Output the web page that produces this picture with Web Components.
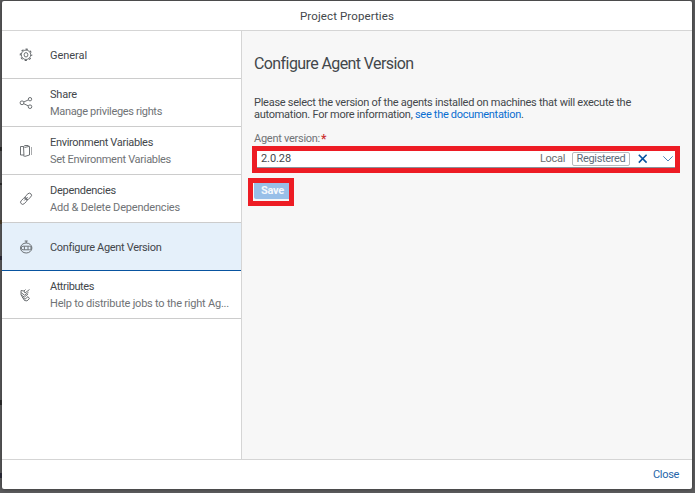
<!DOCTYPE html>
<html lang="en"><head><meta charset="utf-8"><title>Project Properties</title>
<style>
html,body{margin:0;background:#fff}
body{font-family:Roboto,"Noto Sans","Liberation Sans",sans-serif;font-size:11px;color:#43474b;width:699px;height:495px;overflow:hidden}
</style></head><body>
<dialog-backdrop><project-dialog></project-dialog></dialog-backdrop>
<script>
const make=(name,html,setup)=>customElements.define(name,class extends HTMLElement{
  constructor(){super();this.attachShadow({mode:'open'}).innerHTML=html}
  connectedCallback(){if(setup)setup(this,this.shadowRoot)}
});
/* One line of text, tracked so that it fills the width given in "w". */
make('text-run','<style>:host{display:inline-block;white-space:pre;line-height:inherit}span{display:inline-block}</style><span><slot></slot></span>',(el,r)=>{
  const w=+el.getAttribute('w'),s=r.querySelector('span'),n=el.textContent.length;
  s.style.letterSpacing=((w-s.getBoundingClientRect().width)/n)+'px';
  el.style.width=w+'px';
});
const icons={
gear:'<circle cx="7" cy="6.800" r="4.700"/><circle cx="7" cy="6.800" r="5.700" stroke-width="1.100" stroke-dasharray="2.240 2.240" stroke-dashoffset="1.120"/><ellipse cx="7" cy="6.800" rx="1.900" ry="2.200"/>',
share:'<circle cx="3" cy="6.800" r="1.900"/><circle cx="11" cy="3.200" r="1.700"/><circle cx="11" cy="10.700" r="1.800"/><path d="M4.700 6l4.700-2.100M4.700 7.700l4.700 2.200"/>',
book:'<path d="M4.500 2.500h-3v8.500h3.500M5 12.500L4.500 2.500 6 1.500M5.500 3.500L10.500 2.300v8.700L5.500 12.500M6 1.500h3.500"/><path d="M12.500 3v8" opacity=".6"/>',
link:'<rect x="5.400" y="2.400" width="7.600" height="4.200" rx="2.100" transform="rotate(-45 9.200 4.500)"/><rect x="1.100" y="6.900" width="7.600" height="4.200" rx="2.100" transform="rotate(-45 4.900 9)"/><path d="M5.200 8.500l3.500-3.500"/>',
robot:'<path d="M5.700 1h3M7.200 1v2"/><ellipse cx="7.200" cy="8" rx="5.700" ry="5"/><rect x="2.300" y="6.200" width="9.800" height="3.600" rx="1.700"/><path d="M5.400 6.500v3M9 6.500v3"/>',
tags:'<path d="M2 2.500l3 .5 1.500-1.500M5 3l1 2 4.500-3.500M2.200 4.700l3.300 2.500 4-3M2 6.800l3.300 2.300 3.800-3M3.200 9.300l2.800 1.900 3-2.600M5.500 12.500l2.500.4 2.400-2.200M2 2.500v4.300l3.500 5.700M9 8.600l1.400 2.100"/>',
close:'<path d="M2.800 2.800l7.800 7.800M10.600 2.800l-7.800 7.800" stroke-width="1.600"/>',
down:'<path d="M2.300 4.300l4.700 4.700 4.700-4.700"/>'};
make('ui-icon','<style>:host{display:block;width:14px;height:14px}svg{display:block;fill:none;stroke:currentColor;stroke-width:.9}</style><svg width="14" height="14" viewBox="0 0 14 14"></svg>',(el,r)=>{
  r.querySelector('svg').innerHTML=icons[el.getAttribute('name')];
});
make('nav-item',`<style>
:host{display:flex;align-items:center;box-sizing:border-box;height:48px;border-bottom:1px solid #ccc;padding-left:17px;gap:17px;background:#fff}
:host([selected]){background:#e5f0fa;border-bottom-color:#0854a0}
:host([single]) .t{padding-top:1px}
::slotted(ui-icon){color:#5f6367}
.t{display:flex;flex-direction:column;line-height:17px}
.sub{color:#707376}::slotted([slot=sub]){display:block}
</style><slot name="icon"></slot><div class="t"><slot></slot><div class="sub"><slot name="sub"></slot></div></div>`);
make('side-nav',`<style>:host{display:block;box-sizing:border-box;width:240px;border-right:1px solid #d5d5d5;background:#fff}</style>
<nav-item single><ui-icon slot="icon" name="gear"></ui-icon><text-run w="37">General</text-run></nav-item>
<nav-item><ui-icon slot="icon" name="share"></ui-icon><text-run w="27">Share</text-run><text-run slot="sub" w="112">Manage privileges rights</text-run></nav-item>
<nav-item><ui-icon slot="icon" name="book"></ui-icon><text-run w="103">Environment Variables</text-run><text-run slot="sub" w="121">Set Environment Variables</text-run></nav-item>
<nav-item><ui-icon slot="icon" name="link"></ui-icon><text-run w="66">Dependencies</text-run><text-run slot="sub" w="130">Add &amp; Delete Dependencies</text-run></nav-item>
<nav-item single selected><ui-icon slot="icon" name="robot"></ui-icon><text-run w="111">Configure Agent Version</text-run></nav-item>
<nav-item><ui-icon slot="icon" name="tags"></ui-icon><text-run w="44">Attributes</text-run><text-run slot="sub" w="179">Help to distribute jobs to the right Ag...</text-run></nav-item>`);
make('version-field',`<style>
:host{display:flex;box-sizing:border-box;width:428px;height:27px;border:5px solid #ed1c24;background:#fff;align-items:center;padding:0 0 2px 4px;margin-left:-2px;box-shadow:inset 0 -1px #89919a;line-height:14px}
.v{flex:1}.loc{color:#6a6d70;margin:1px 7px 0 0}
.tag{box-sizing:border-box;width:58px;height:14px;border:1px solid #b7babd;border-radius:2px;line-height:12px;text-align:center;color:#5d6c7a}
.x{color:#0854a0;margin-left:6px}.d{color:#3c78b4;margin:0 0 0 11px}
</style><div class="v"><text-run w="30">2.0.28</text-run></div><div class="loc"><text-run w="25">Local</text-run></div><div class="tag"><text-run w="49">Registered</text-run></div><ui-icon class="x" name="close"></ui-icon><ui-icon class="d" name="down"></ui-icon>`);
make('save-button',`<style>
:host{display:block;box-sizing:border-box;width:46px;height:28px;border:5px solid #ed1c24;margin:5px 0 0 -6px;padding:0 0 2px 1px;background:#f7f7f7}
div{box-sizing:border-box;height:16px;line-height:14px;padding:1px 0 0 7px;background:#98bfe8;color:#f4f8fc;font-weight:bold;border-radius:0 0 0 2px}
</style><div><text-run w="23">Save</text-run></div>`);
make('version-panel',`<style>
:host{display:block;flex:1;background:#f7f7f7;padding:23px 0 0 12px}
h1{font-size:16px;font-weight:400;line-height:20px;margin:0 0 23px;height:20px}
p{margin:0;line-height:12px;height:12px;display:flex}a{color:#0a6ed1}
label{display:flex;line-height:14px;height:14px;color:#707376;margin:11px 0 0}b{color:#c33;font-size:12px;margin-left:1px}
</style><h1><text-run w="159">Configure Agent Version</text-run></h1>
<p><text-run w="377">Please select the version of the agents installed on machines that will execute the</text-run></p>
<p><text-run w="161">automation. For more information, </text-run><a><text-run w="106">see the documentation</text-run></a><span>.</span></p>
<label><text-run w="66">Agent version:</text-run><b>*</b></label>
<version-field></version-field><save-button></save-button>`);
make('project-dialog',`<style>
:host{display:flex;flex-direction:column;width:690px;height:488px;background:#fff;border-radius:2px;overflow:hidden;box-shadow:0 0 4px #333}
header{box-sizing:border-box;height:30px;border-bottom:1px solid #d5d5d5;line-height:30px;text-align:center;font-size:11.5px}
main{display:flex;height:428px}
footer{flex:1;border-top:1px solid #d5d5d5;display:flex;justify-content:flex-end;padding-right:13px;line-height:29px;color:#2565a9}
</style><header><text-run w="94">Project Properties</text-run></header><main><side-nav></side-nav><version-panel></version-panel></main><footer><text-run w="26">Close</text-run></footer>`);
/* Dimmed page behind the dialog, with faint marks of its content at the left edge. */
make('dialog-backdrop',`<style>:host{display:block;box-sizing:border-box;width:695px;height:493px;padding:1px 0 0 2px;overflow:hidden;
background:linear-gradient(#222,#222) 0 147px/2px 4px no-repeat,linear-gradient(#222,#222) 0 183px/2px 2px no-repeat,linear-gradient(#4b3a20,#4b3a20) 0 220px/2px 4px no-repeat,linear-gradient(#223,#223) 0 256px/2px 4px no-repeat,linear-gradient(#222,#222) 0 400px/2px 5px no-repeat,linear-gradient(#223,#223) 0 473px/2px 5px no-repeat,#5c5c5e}</style><slot></slot>`);
</script></body></html>
